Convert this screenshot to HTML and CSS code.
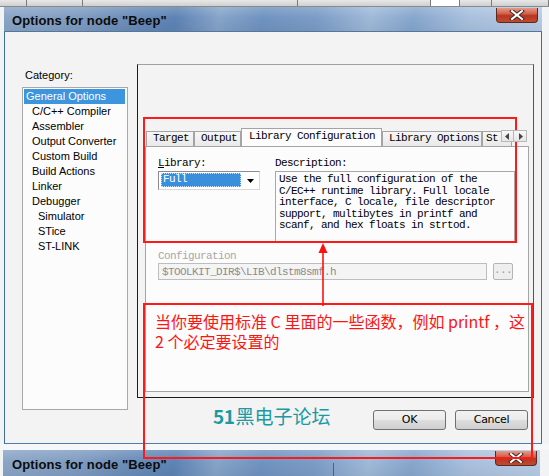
FILE: index.html
```html
<!DOCTYPE html>
<html>
<head>
<meta charset="utf-8">
<link rel="stylesheet" href="styles.css">
</head>
<body>
<div class="screen">
  <div class="topstrip">
    <span class="seg w24"></span><span class="seg w56"></span><span class="seg w215"></span><span class="seg w133"></span><span class="seg w29 white"></span><span class="seg w32"></span><span class="seg grow"></span>
  </div>
  <div class="window">
    <div class="titlebar">
      <span class="title">Options for node "Beep"</span>
      <span class="close"><svg width="16" height="10" viewBox="0 0 16 10"><path d="M3 1 L13 9 M13 1 L3 9" stroke="#3a2a2a" stroke-width="4" stroke-linecap="square"/><path d="M3 1 L13 9 M13 1 L3 9" stroke="#fff" stroke-width="2" stroke-linecap="square"/></svg></span>
    </div>
    <div class="client">
      <div class="leftcol">
        <div class="cat-label">Category:</div>
        <div class="catlist">
          <div class="item sel">General Options</div>
          <div class="item l1">C/C++ Compiler</div>
          <div class="item l1">Assembler</div>
          <div class="item l1">Output Converter</div>
          <div class="item l1">Custom Build</div>
          <div class="item l1">Build Actions</div>
          <div class="item l1">Linker</div>
          <div class="item l1">Debugger</div>
          <div class="item l2">Simulator</div>
          <div class="item l2">STice</div>
          <div class="item l2">ST-LINK</div>
        </div>
      </div>
      <div class="rightcol">
        <div class="panel">
          <div class="tabs">
            <div class="tab t-target">Target</div>
            <div class="tab t-output">Output</div>
            <div class="tab sel t-libconf">Library Configuration</div>
            <div class="tab t-libopt">Library Options</div>
            <div class="tab t-st">St</div>
            <div class="tabarrows">
              <span class="arr"><svg width="5" height="7" viewBox="0 0 5 7"><path d="M4 0 L0 3.5 L4 7 Z" fill="#444"/></svg></span>
              <span class="arr"><svg width="5" height="7" viewBox="0 0 5 7"><path d="M1 0 L5 3.5 L1 7 Z" fill="#444"/></svg></span>
            </div>
          </div>
          <div class="page">
            <div class="row1">
              <div class="libcol">
                <div class="lbl"><u>L</u>ibrary:</div>
                <div class="combo">
                  <span class="combo-sel">Full</span>
                  <span class="combo-arrow"><svg width="7" height="4" viewBox="0 0 7 4"><path d="M0 0 H7 L3.5 4 Z" fill="#000"/></svg></span>
                </div>
              </div>
              <div class="desccol">
                <div class="lbl">Description:</div>
                <div class="descbox">Use the full configuration of the<br>C/EC++ runtime library. Full locale<br>interface, C locale, file descriptor<br>support, multibytes in printf and<br>scanf, and hex floats in strtod.</div>
              </div>
            </div>
            <div class="config">
              <div class="lbl dis">Configuration</div>
              <div class="configrow">
                <div class="cfginput">$TOOLKIT_DIR$\LIB\dlstm8smf.h</div>
                <div class="cfgbtn">...</div>
              </div>
            </div>
          </div>
        </div>
        <div class="bottomrow">
          <div class="watermark"><span class="wm-num">51</span>黑电子论坛</div>
          <div class="btn ok">OK</div>
          <div class="btn cancel">Cancel</div>
        </div>
      </div>
    </div>
  </div>
  <div class="gap"></div>
  <div class="titlebar second">
    <span class="title">Options for node "Beep"</span>
    <span class="close"><svg width="16" height="10" viewBox="0 0 16 10"><path d="M3 1 L13 9 M13 1 L3 9" stroke="#3a2a2a" stroke-width="4" stroke-linecap="square"/><path d="M3 1 L13 9 M13 1 L3 9" stroke="#fff" stroke-width="2" stroke-linecap="square"/></svg></span>
  </div>

  <div class="anno r1"></div>
  <div class="anno r2">
    <div class="note">当你要使用标准 C 里面的一些函数，例如 printf ，这<br>2 个必定要设置的</div>
  </div>
  <svg class="arrow" width="20" height="70" viewBox="0 0 20 70">
    <path d="M10 8 V63" stroke="#ff1010" stroke-width="1.6"/>
    <path d="M10 0 L5.5 10 L14.5 10 Z" fill="#ff1010"/>
  </svg>
  <div class="anno tick"></div>
</div>
</body>
</html>
```

FILE: styles.css
```css
* { box-sizing: border-box; }
html, body { margin: 0; padding: 0; }
body {
  width: 549px;
  height: 476px;
  overflow: hidden;
  background: #f2f3f5;
  font-family: "Liberation Sans", Arial, sans-serif;
  font-size: 11px;
  color: #000;
}
.screen {
  position: relative;
  width: 549px;
  height: 476px;
  overflow: hidden;
}

/* top strip of the window behind */
.topstrip {
  display: flex;
  height: 7px;
  background: #d9d9d9;
  border-bottom: 1px solid #8a8a8a;
}
.seg {
  height: 6px;
  border-right: 1px solid #7a7a7a;
  background: linear-gradient(#e8e8e8, #cfcfcf);
}
.seg.white { background: #ffffff; }
.w24 { width: 27px; }
.w56 { width: 56px; }
.w215 { width: 215px; }
.w133 { width: 133px; }
.w29 { width: 29px; }
.w32 { width: 32px; }
.grow { flex: 1; }

/* main window */
.window {
  margin-left: 4px;
  width: 538px;
  border-left: 1px solid #3f6d9e;
  border-right: 1px solid #3f6d9e;
  border-bottom: 1px solid #4a7cae;
}
.titlebar {
  position: relative;
  display: flex;
  align-items: center;
  height: 25px;
  padding-left: 8px;
  border-bottom: 1px solid #56779d;
  background:
    linear-gradient(rgba(255,255,255,0.18), rgba(255,255,255,0) 45%, rgba(0,0,0,0.05)),
    linear-gradient(100deg, #8aa5c6 0%, #7f9cc1 14%, #6a8cb8 24%, #5d83b4 32%, #86a4c9 40%, #6f93c0 48%, #7b9cc6 58%, #9fb9d8 68%, #86a6cd 76%, #a8c0de 86%, #b7cbe4 100%);
}
.window .titlebar { margin-left: -1px; margin-right: -1px; }
.title {
  font-family: "Liberation Sans", Arial, sans-serif;
  font-weight: bold;
  font-size: 13px;
  color: #0c0c0c;
  letter-spacing: 0.1px;
  margin-top: 2px;
}
.close {
  position: absolute;
  right: 4px;
  top: 1px;
  width: 42px;
  height: 15px;
  border: 1px solid #5a2a22;
  border-top: none;
  border-radius: 0 0 4px 4px;
  background: linear-gradient(#e49a86 0%, #d2614a 40%, #b73720 55%, #c14a2e 100%);
  display: flex;
  align-items: center;
  justify-content: center;
}

.client {
  display: flex;
  height: 411px;
  padding: 32px 7px 0 17px;
  background: #f3f3f3;
}
.leftcol {
  width: 106px;
  margin-right: 9px;
}
.cat-label {
  margin-top: 5px;
  height: 13px;
  line-height: 13px;
  padding-left: 3px;
}
.catlist {
  margin-top: 5px;
  height: 323px;
  background: #fcfcfc;
  border: 1px solid #a8a8a8;
  padding: 1px 1px 0 1px;
}
.item {
  height: 15px;
  line-height: 15px;
  white-space: nowrap;
}
.item.sel {
  background: #3c95dd;
  color: #fff;
  padding-left: 2px;
  margin-right: 1px;
}
.item.l1 { padding-left: 8px; }
.item.l2 { padding-left: 14px; }

.rightcol {
  width: 397px;
  display: flex;
  flex-direction: column;
}
.panel {
  height: 334px;
  border-top: 1px solid #a0a0a0;
  border-left: 1px solid #1c1c1c;
  border-right: 1px solid #555;
  border-bottom: 1px solid #1c1c1c;
  padding: 63px 4px 0 7px;
  background: #f3f3f3;
}
.tabs {
  position: relative;
  display: flex;
  align-items: flex-end;
  height: 18px;
  padding-left: 1px;
  overflow: hidden;
  font-family: "Liberation Mono", "Courier New", monospace;
  font-size: 11px;
  letter-spacing: -0.6px;
}
.tab {
  flex: none;
  height: 15px;
  line-height: 13px;
  border: 1px solid #a4a4a4;
  border-bottom: none;
  background: linear-gradient(#f6f6f6, #e9e9e9);
  padding-left: 6px;
  white-space: nowrap;
  overflow: hidden;
}
.tab.sel {
  height: 18px;
  line-height: 15px;
  background: #fcfcfc;
  position: relative;
  z-index: 1;
  padding-left: 7px;
}
.t-target { width: 48px; }
.t-output { width: 47px; }
.t-libconf { width: 141px; }
.t-libopt { width: 100px; }
.t-st { width: 30px; padding-left: 3px; }
.tabarrows {
  position: absolute;
  right: 2px;
  top: 2px;
  display: flex;
  z-index: 2;
}
.arr {
  width: 13px;
  height: 12px;
  border: 1px solid #b8b8b8;
  background: linear-gradient(#f8f8f8, #e6e6e6);
  display: flex;
  align-items: center;
  justify-content: center;
}
.arr + .arr { border-left: none; }

.page {
  height: 246px;
  border: 1px solid #a4a4a4;
  background: #fcfcfc;
  padding: 10px 12px 0 12px;
  font-family: "Liberation Mono", "Courier New", monospace;
  font-size: 11px;
  letter-spacing: -0.6px;
}
.row1 { display: flex; }
.libcol { width: 117px; }
.desccol { width: 240px; }
.lbl {
  height: 12px;
  line-height: 12px;
  white-space: nowrap;
}
.lbl.dis { color: #a8a8a8; }
.combo {
  position: relative;
  margin-top: 2px;
  width: 102px;
  height: 19px;
  border: 1px solid #8c8c8c;
  border-right-color: #d8d8d8;
  border-bottom-color: #d8d8d8;
  background: #fff;
  padding: 1px 0 0 2px;
}
.combo-sel {
  display: block;
  width: 80px;
  height: 14px;
  line-height: 13px;
  background: #3a8fdc;
  color: #fff;
  padding-left: 2px;
  outline: 1px dotted #c8e0f6;
  outline-offset: -1px;
}
.combo-arrow {
  position: absolute;
  right: 5px;
  top: 7px;
  line-height: 0;
}
.descbox {
  margin-top: 2px;
  height: 71px;
  border: 1px solid #a8a8a8;
  background: #fcfcfc;
  padding: 2px 0 0 3px;
  line-height: 11.6px;
  white-space: nowrap;
}
.config { margin-top: 8px; }
.configrow {
  display: flex;
  margin-top: 1px;
  gap: 6px;
}
.cfginput {
  width: 329px;
  height: 17px;
  border: 1px solid #bdbdbd;
  background: #f4f4f4;
  color: #8c8c8c;
  padding: 2px 0 0 3px;
  line-height: 12px;
  white-space: nowrap;
}
.cfgbtn {
  width: 20px;
  height: 17px;
  border: 1px solid #b4b4b4;
  border-radius: 2px;
  background: #eeeeee;
  color: #9a9a9a;
  text-align: center;
  line-height: 12px;
}

.bottomrow {
  display: flex;
  align-items: flex-start;
  margin-top: 12px;
  height: 20px;
  padding-right: 6px;
}
.watermark {
  margin-left: 76px;
  margin-top: -4px;
  font-family: "Noto Sans CJK SC", "Noto Sans", sans-serif;
  font-size: 19px;
  line-height: 20px;
  color: #1b9aa3;
  white-space: nowrap;
}
.wm-num { font-weight: bold; letter-spacing: -0.5px; margin-right: 1px; }
.btn {
  width: 73px;
  height: 20px;
  border: 1px solid #707070;
  border-radius: 3px;
  background: linear-gradient(#f2f2f2 0%, #ebebeb 48%, #dddddd 52%, #cfcfcf 100%);
  text-align: center;
  line-height: 18px;
  font-family: "DejaVu Sans", sans-serif;
  font-size: 11px;
  letter-spacing: -0.3px;
}
.btn.ok { margin-left: auto; }
.btn.cancel { margin-left: 9px; }

.gap { height: 6px; background: #f6f7f8; }
.titlebar.second {
  margin-left: 3px;
  width: 537px;
  height: 27px;
  padding-left: 9px;
  border-bottom: none;
}
.titlebar.second .close { top: 1px; right: 3px; }

/* red annotations (overlay) */
.anno { position: absolute; border: 2px solid #ff1a1a; }
.r1 { left: 143px; top: 117px; width: 374px; height: 126px; }
.r2 { left: 143px; top: 303px; width: 390px; height: 156px; }
.note {
  padding: 6px 0 0 10px;
  font-family: "Noto Sans CJK SC", "Noto Sans", sans-serif;
  font-size: 16px;
  line-height: 20px;
  color: #ff1414;
  white-space: nowrap;
}
.arrow { position: absolute; left: 313px; top: 243px; }
.tick { left: 333px; top: 463px; width: 0; height: 14px; border-width: 0 0 0 1px; }
```
